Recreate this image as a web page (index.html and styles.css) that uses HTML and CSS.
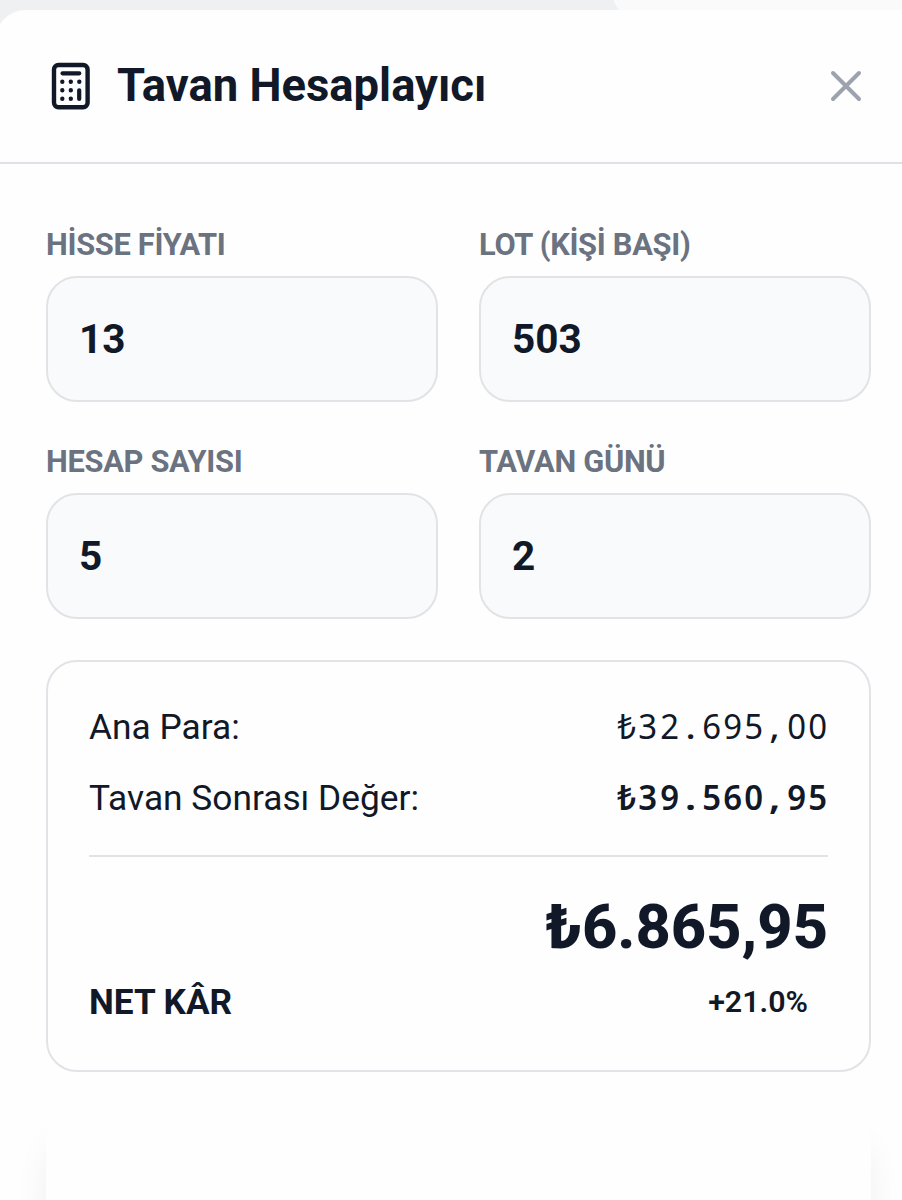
FILE: index.html
```html
<!DOCTYPE html>
<html lang="tr">
<head>
    <meta charset="UTF-8">
    <meta name="viewport" content="width=device-width, initial-scale=1.0">
    <title>Tavan Hesaplayıcı</title>
    <link rel="stylesheet" href="styles.css">
</head>
<body>
    <div class="backdrop-card"></div>
    <div class="modal">
        <header class="modal-header">
            <svg class="icon-calc" width="40" height="48" viewBox="0 0 40 48" fill="none" stroke="currentColor" stroke-linecap="round">
                <rect x="3" y="3" width="33.6" height="42.2" rx="4.5" stroke-width="4.4"/>
                <path d="M11.5 11.3H28.3M28.2 28.3V37" stroke-width="4.2"/>
                <path d="M11.3 19.8h.01M19.8 19.8h.01M28.3 19.8h.01M11.3 28.2h.01M19.8 28.2h.01M11.3 36.7h.01M19.8 36.7h.01" stroke-width="4.4"/>
            </svg>
            <h1>Tavan Hesaplayıcı</h1>
            <button class="close" aria-label="Kapat">
                <svg width="32" height="32" viewBox="0 0 32 32" fill="none" stroke="currentColor" stroke-width="4" stroke-linecap="round">
                    <path d="M3 3l26 26M29 3L3 29"/>
                </svg>
            </button>
        </header>
        <main>
            <form class="fields">
                <div class="field">
                    <label for="fiyat">HİSSE FİYATI</label>
                    <input id="fiyat" type="text" value="13">
                </div>
                <div class="field">
                    <label for="lot">LOT (KİŞİ BAŞI)</label>
                    <input id="lot" type="text" value="503">
                </div>
                <div class="field">
                    <label for="hesap">HESAP SAYISI</label>
                    <input id="hesap" type="text" value="5">
                </div>
                <div class="field">
                    <label for="gun">TAVAN GÜNÜ</label>
                    <input id="gun" type="text" value="2">
                </div>
            </form>
            <section class="result">
                <div class="row">
                    <span>Ana Para:</span>
                    <span class="mono"><i>₺</i><i>3</i><i>2</i><i class="sep">.</i><i>6</i><i>9</i><i>5</i><i class="sep">,</i><i>0</i><i>0</i></span>
                </div>
                <div class="row">
                    <span>Tavan Sonrası Değer:</span>
                    <span class="mono strong"><i>₺</i><i>3</i><i>9</i><i class="sep">.</i><i>5</i><i>6</i><i>0</i><i class="sep">,</i><i>9</i><i>5</i></span>
                </div>
                <div class="net">
                    <span class="net-label">NET KÂR</span>
                    <div class="net-value">
                        <div class="amount">₺6.865,95</div>
                        <div class="percent">+21.0%</div>
                    </div>
                </div>
            </section>
            <div class="next-card"></div>
        </main>
    </div>
</body>
</html>
```

FILE: styles.css
```css
* {
    box-sizing: border-box;
}
body {
    margin: 0;
    padding-top: 10px;
    height: 1200px;
    overflow: hidden;
    position: relative;
    background-color: #eff0f2;
    color: #111827;
    font-family: Roboto, sans-serif;
}
/* Card of the page behind the modal */
.backdrop-card {
    position: absolute;
    top: -40px;
    left: 613px;
    width: 330px;
    height: 58px;
    border-radius: 24px;
    background-color: #fafafa;
}
.modal {
    position: relative;
    height: 1190px;
    margin: 0 -30px 0 -5px;
    padding: 0 30px 0 5px;
    border-radius: 31px 31px 0 0;
    background-color: #fefefe;
    overflow: hidden;
}
.modal-header {
    display: flex;
    align-items: center;
    height: 154px;
    margin: 0 -30px 0 -5px;
    padding: 0 70px 0 56px;
    border-bottom: 2px solid #dfe1e6;
}
h1 {
    flex: 1;
    margin: 0 0 0 26px;
    font-size: 45.4px;
    line-height: 60px;
    font-weight: 700;
}
.close {
    display: flex;
    padding: 0;
    border: 0;
    background: none;
    color: #9ca3af;
}
main {
    padding: 62px 31px 0 46px;
}
.fields {
    display: grid;
    grid-template-columns: 1fr 1fr;
    gap: 41px;
}
.field label {
    display: block;
    height: 50px;
    font-size: 30.8px;
    line-height: 38px;
    letter-spacing: -0.3px;
    font-weight: 700;
    color: #6b7280;
}
.field input {
    display: block;
    width: 100%;
    height: 126px;
    padding: 0 31px;
    border: 2px solid #e1e3e7;
    border-radius: 31px;
    background-color: #f9fafb;
    color: #111827;
    font: 700 40.5px Roboto, sans-serif;
}
.result {
    height: 412px;
    margin-top: 41px;
    padding: 39px 41px;
    border: 2px solid #e1e3e7;
    border-radius: 31px;
}
.row {
    display: flex;
    justify-content: space-between;
    height: 52px;
    margin-bottom: 19px;
    font-size: 35.3px;
    line-height: 52px;
}
.mono {
    display: flex;
    font-family: "Noto Sans", sans-serif;
    font-size: 35px;
    line-height: 50px;
}
/* Fixed-width figures */
.mono i {
    width: 21.2px;
    display: flex;
    justify-content: center;
    font-style: normal;
    transform: scaleX(0.94);
}
.mono .sep {
    transform: scaleX(1.2);
}
.strong {
    font-weight: 600;
}
.net {
    display: flex;
    justify-content: space-between;
    align-items: flex-end;
    margin-top: 31px;
    padding-top: 29px;
    border-top: 2px solid #e1e3e7;
}
.net-label {
    font-size: 35.2px;
    line-height: 54px;
    font-weight: 700;
}
.net-value {
    text-align: right;
}
.amount {
    font-size: 61.3px;
    line-height: 82px;
    font-weight: 800;
}
.percent {
    padding: 14px 20px 7px;
    font-size: 30.4px;
    line-height: 40px;
    font-weight: 600;
}
.next-card {
    height: 200px;
    margin-top: 41px;
    border-radius: 31px;
    background-color: #fefefe;
    box-shadow: 0 26px 42px -8px rgba(0, 0, 0, 0.09);
}
```
